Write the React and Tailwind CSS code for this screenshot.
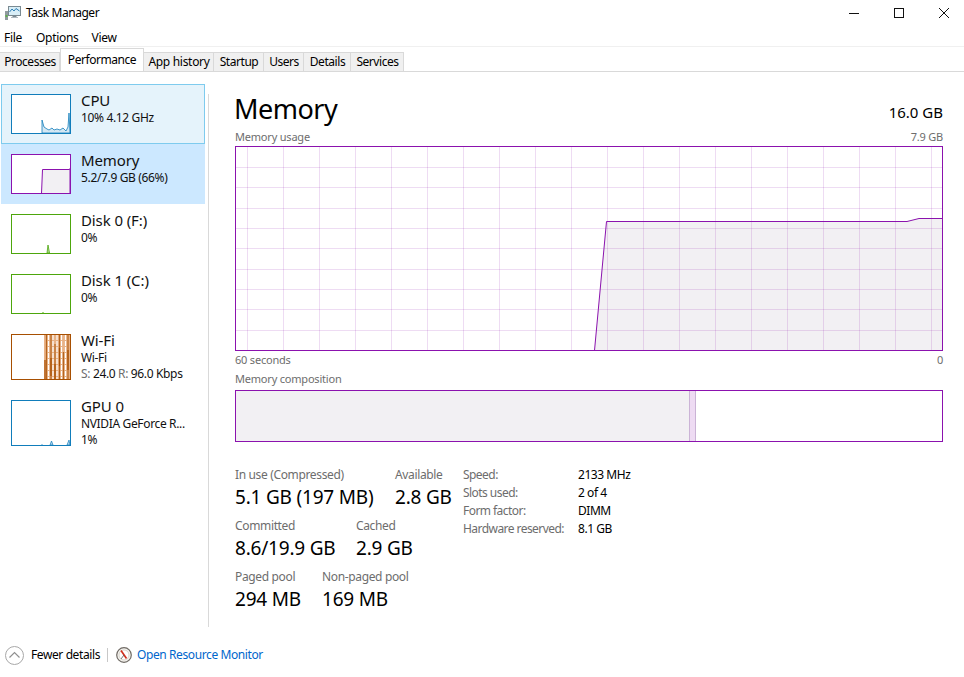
import React from "react";

const font = { fontFamily: '"Noto Sans", sans-serif' };

function Thumb({ color, h = 40, children }) {
  return (
    <svg width="60" height={h} viewBox={`0 0 60 ${h}`} className="block shrink-0">
      <rect x="0" y="0" width="60" height={h} fill="#fff" />
      {children}
      <rect x="0.5" y="0.5" width="59" height={h - 1} fill="none" stroke={color} />
    </svg>
  );
}

function Item({ title, lines, selected, hover, h = 60, thumb }) {
  const cls = selected
    ? "bg-[#cce8ff] pl-[10px] pt-[10px]"
    : hover
    ? "bg-[#e5f3fb] border border-[#7ecbee] pl-[9px] pt-[9px]"
    : "pl-[10px] pt-[10px]";
  return (
    <div className={`flex gap-[10px] w-[204px] ${cls}`} style={{ height: h }}>
      {thumb}
      <div className="flex flex-col -mt-[4px] whitespace-nowrap">
        <div className="text-[15px] leading-[20px] text-[#111] tracking-[-0.1px]">{title}</div>
        {lines.map((l, i) => (
          <div key={i} className="text-[12px] leading-[16px] tracking-[-0.35px] text-[#111]">
            {l}
          </div>
        ))}
      </div>
    </div>
  );
}

function Stat({ label, value, w }) {
  return (
    <div className={w}>
      <div className="text-[12px] leading-[16px] pt-[1px] text-[#6d6d6d] tracking-[-0.35px] whitespace-nowrap">{label}</div>
      <div className="text-[19px] leading-[24px] mt-[2px] text-black tracking-[-0.2px] whitespace-nowrap">{value}</div>
    </div>
  );
}

function Spec({ k, v }) {
  return (
    <div className="flex h-[18px] items-center text-[12px] whitespace-nowrap">
      <div className="w-[115px] text-[#6d6d6d] tracking-[-0.55px]">{k}</div>
      <div className="text-black tracking-[-0.45px]">{v}</div>
    </div>
  );
}

function MainChart() {
  const vs = Array.from({ length: 20 }, (_, i) => 12.5 + 36 * i);
  const hs = [21, 41, 62, 82, 102, 123, 143, 163, 184];
  return (
    <svg width="708" height="205" viewBox="0 0 708 205" className="block">
      <rect width="708" height="205" fill="#fff" />
      <path d="M359.5 204.5 L371.5 75.5 L672 75.5 L684 72.5 L707.5 72.5 L707.5 204.5 Z" fill="#f2f0f3" />
      {vs.map((x) => (
        <line key={x} x1={x} x2={x} y1="1" y2="204" stroke="#8b12ae" strokeOpacity="0.15" />
      ))}
      {hs.map((y) => (
        <line key={y} x1="1" x2="707" y1={y + 0.5} y2={y + 0.5} stroke="#8b12ae" strokeOpacity="0.15" />
      ))}
      <path d="M0 204.5 L359.5 204.5 L371.5 75.5 L672 75.5 L684 72.5 L707.5 72.5" fill="none" stroke="#8b12ae" />
      <rect x="0.5" y="0.5" width="707" height="204" fill="none" stroke="#8b12ae" />
    </svg>
  );
}

function WifiLines() {
  return (
    <>
      <rect x="33" y="1" width="26" height="44" fill="#e8b286" />
      <path d="M37.5 1V45M42 1V45M46 1V45M50.5 1V45M54.5 1V45" stroke="#fff" strokeWidth="1.2" strokeDasharray="5 1" />
      <path d="M35.5 1V45M40 1V45M44 10V45M48.5 1V45M52.5 18V45M57 1V45" stroke="#b5641d" strokeWidth="1.2" />
      <path d="M34 26V45M40 24V42M44 30V45M48.5 14V32M57 16V36" stroke="#a74f01" strokeWidth="1.2" />
    </>
  );
}

function AppIcon() {
  return (
    <svg width="16" height="16" viewBox="0 0 16 16" className="block shrink-0">
      <rect x="0" y="6" width="3" height="9" fill="#8f9a9e" />
      <rect x="0.5" y="10" width="2" height="2" fill="#5fb04a" />
      <rect x="3.5" y="1.5" width="12" height="9" fill="#d8eef7" stroke="#7a8a92" />
      <path d="M4.5 7 L7 4 L9 6 L11 3.5 L14.5 6" fill="none" stroke="#2f7fb5" />
      <rect x="7.5" y="11" width="4" height="1" fill="#7a8a92" />
      <rect x="6" y="12" width="7" height="1" fill="#b0bac0" />
    </svg>
  );
}

function WinButtons() {
  return (
    <div className="flex items-center pr-[15px] gap-[35px]">
      <svg width="10" height="10" viewBox="0 0 10 10" className="block"><path d="M0 5.5H10" stroke="#111" /></svg>
      <svg width="10" height="10" viewBox="0 0 10 10" className="block"><rect x="0.5" y="0.5" width="9" height="9" fill="none" stroke="#111" /></svg>
      <svg width="10" height="10" viewBox="0 0 10 10" className="block"><path d="M0 0L10 10M10 0L0 10" stroke="#111" /></svg>
    </div>
  );
}

function Tab({ children, w, active, wide }) {
  const track = wide ? "tracking-[-0.3px]" : "tracking-[-0.45px]";
  return active ? (
    <div
      className={`flex items-start justify-center pt-[2px] h-[23px] bg-white border border-b-0 border-[#d9d9d9] text-[12px] text-black ${track}`}
      style={{ width: w }}
    >
      {children}
    </div>
  ) : (
    <div
      className={`flex items-center justify-center pl-[1px] h-[19px] bg-[#f0f0f0] border-t border-r border-[#d9d9d9] text-[12px] text-black ${track}`}
      style={{ width: w }}
    >
      {children}
    </div>
  );
}

export default function App() {
  return (
    <div className="w-[964px] h-[677px] bg-white overflow-hidden flex flex-col" style={font}>
      {/* title bar */}
      <div className="h-[26px] flex items-center justify-between">
        <div className="flex items-center pl-[5px] gap-[5px] text-[12px] tracking-[-0.45px] text-black">
          <AppIcon />
          <span>Task Manager</span>
        </div>
        <WinButtons />
      </div>
      {/* menu */}
      <div className="h-[20px] flex items-center text-[12px] tracking-[-0.3px] text-black pl-[4px] pt-[4px] gap-[14px]">
        <span>File</span>
        <span>Options</span>
        <span className="-ml-[1px]">View</span>
      </div>
      <div className="h-[1px] bg-[#f0f0f0]" />
      {/* tabs */}
      <div className="h-[25px] flex items-end border-b border-[#d9d9d9]">
        <Tab w={60}>Processes</Tab>
        <Tab w={84} active>Performance</Tab>
        <Tab w={70} wide>App history</Tab>
        <Tab w={50}>Startup</Tab>
        <Tab w={40}>Users</Tab>
        <Tab w={47}>Details</Tab>
        <Tab w={53}>Services</Tab>
      </div>
      {/* body */}
      <div className="flex flex-1 min-h-0">
        <div className="w-[208px] pl-[1px] pt-[12px]">
          <Item
            title="CPU"
            lines={["10%  4.12 GHz"]}
            hover
            thumb={
              <Thumb color="#117dbb">
                <path d="M31 39V26L33 33L36 35L38 36L41 34L43 36L46 35L49 36L52 34L55 37L57 33L58 19L59 39Z" fill="#d3e7f3" stroke="#117dbb" strokeWidth="0.8" />
              </Thumb>
            }
          />
          <Item
            title="Memory"
            lines={["5.2/7.9 GB (66%)"]}
            selected
            thumb={
              <Thumb color="#8b12ae">
                <path d="M30.5 39.5L31.5 15.5H58.5L59 14.5V39.5Z" fill="#f2f0f3" stroke="#8b12ae" />
              </Thumb>
            }
          />
          <Item
            title="Disk 0 (F:)"
            lines={["0%"]}
            thumb={
              <Thumb color="#4da60c">
                <path d="M36 39L37 31L38.5 39Z" fill="#b7dc9e" stroke="#4da60c" strokeWidth="0.8" />
              </Thumb>
            }
          />
          <Item
            title="Disk 1 (C:)"
            lines={["0%"]}
            thumb={
              <Thumb color="#4da60c">
                <path d="M32 39V38" stroke="#4da60c" />
              </Thumb>
            }
          />
          <Item
            title="Wi-Fi"
            h={66}
            lines={[
              "Wi-Fi",
              <span key="s">
                <span className="text-[#6d6d6d]">S:</span> 24.0 <span className="text-[#6d6d6d]">R:</span> 96.0 Kbps
              </span>,
            ]}
            thumb={
              <Thumb color="#a74f01" h={46}>
                <WifiLines />
              </Thumb>
            }
          />
          <Item
            title="GPU 0"
            h={66}
            lines={["NVIDIA GeForce R...", "1%"]}
            thumb={
              <Thumb color="#117dbb" h={46}>
                <path d="M39 45L40.5 41L42 45ZM56 45L58 40L59 45ZM31 45V44" fill="#b9d8ec" stroke="#117dbb" strokeWidth="0.7" />
              </Thumb>
            }
          />
        </div>
        <div className="w-px h-[533px] mt-[22px] bg-[#d9d9d9]" />
        <div className="w-[708px] ml-[26px] flex flex-col">
          <div className="flex justify-between items-end h-[50px]">
            <div className="text-[27px] leading-[36px] -ml-[1px] -mb-[5px] text-black tracking-[-0.5px]">Memory</div>
            <div className="text-[15px] leading-[20px] text-black">16.0 GB</div>
          </div>
          <div className="flex justify-between h-[24px] pt-[8px] text-[11px] leading-[14px] text-[#6d6d6d] tracking-[-0.2px]">
            <span>Memory usage</span>
            <span>7.9 GB</span>
          </div>
          <MainChart />
          <div className="flex justify-between h-[20px] pt-[2px] text-[11px] leading-[14px] text-[#6d6d6d] tracking-[-0.2px]">
            <span>60 seconds</span>
            <span>0</span>
          </div>
          <div className="h-[19px] text-[11px] leading-[14px] pt-[1px] text-[#6d6d6d] tracking-[-0.2px]">
            Memory composition
          </div>
          <div className="h-[52px] border border-[#8b12ae] flex">
            <div className="w-[454px] bg-[#f2f0f3] border-r border-[#cbb3d6]" />
            <div className="w-[6px] bg-[#eedbf3] border-r border-[#cbb3d6]" />
          </div>
          <div className="flex mt-[24px]">
            <div className="w-[228px] flex flex-col gap-[8px]">
              <div className="flex">
                <Stat w="w-[160px]" label="In use (Compressed)" value="5.1 GB (197 MB)" />
                <Stat label="Available" value="2.8 GB" />
              </div>
              <div className="flex">
                <Stat w="w-[121px]" label="Committed" value="8.6/19.9 GB" />
                <Stat label="Cached" value="2.9 GB" />
              </div>
              <div className="flex">
                <Stat w="w-[87px]" label="Paged pool" value="294 MB" />
                <Stat label="Non-paged pool" value="169 MB" />
              </div>
            </div>
            <div>
              <Spec k="Speed:" v="2133 MHz" />
              <Spec k="Slots used:" v="2 of 4" />
              <Spec k="Form factor:" v="DIMM" />
              <Spec k="Hardware reserved:" v="8.1 GB" />
            </div>
          </div>
        </div>
      </div>
      {/* footer */}
      <div className="h-[50px] flex items-start pt-[18px] pl-[5px] text-[12px] tracking-[-0.4px] whitespace-nowrap">
        <div className="flex items-center h-[20px]">
          <svg width="19" height="19" viewBox="0 0 19 19" className="block shrink-0">
            <circle cx="9.5" cy="9.5" r="9" fill="#fff" stroke="#a8a8a8" />
            <path d="M4.5 11.5L9.5 6.5L14.5 11.5" fill="none" stroke="#909090" strokeWidth="1.2" />
          </svg>
          <span className="ml-[7px] text-black w-[70px]">Fewer details</span>
          <div className="w-px h-[14px] bg-[#c8c8c8] ml-[6px]" />
          <svg width="16" height="16" viewBox="0 0 16 16" className="block shrink-0 ml-[8px]">
            <circle cx="8" cy="8" r="7.3" fill="#f4f2ee" stroke="#6f6a64" strokeWidth="1.2" />
            <circle cx="8" cy="8" r="5" fill="#fff" stroke="#c9c3b8" strokeWidth="0.7" />
            <path d="M5 3.5L10.5 11.5" stroke="#d0301e" strokeWidth="1.6" />
            <path d="M8 8L5 12" stroke="#555" strokeWidth="0.8" />
          </svg>
          <span className="ml-[5px] text-[#0066cc]">Open Resource Monitor</span>
        </div>
      </div>
    </div>
  );
}
